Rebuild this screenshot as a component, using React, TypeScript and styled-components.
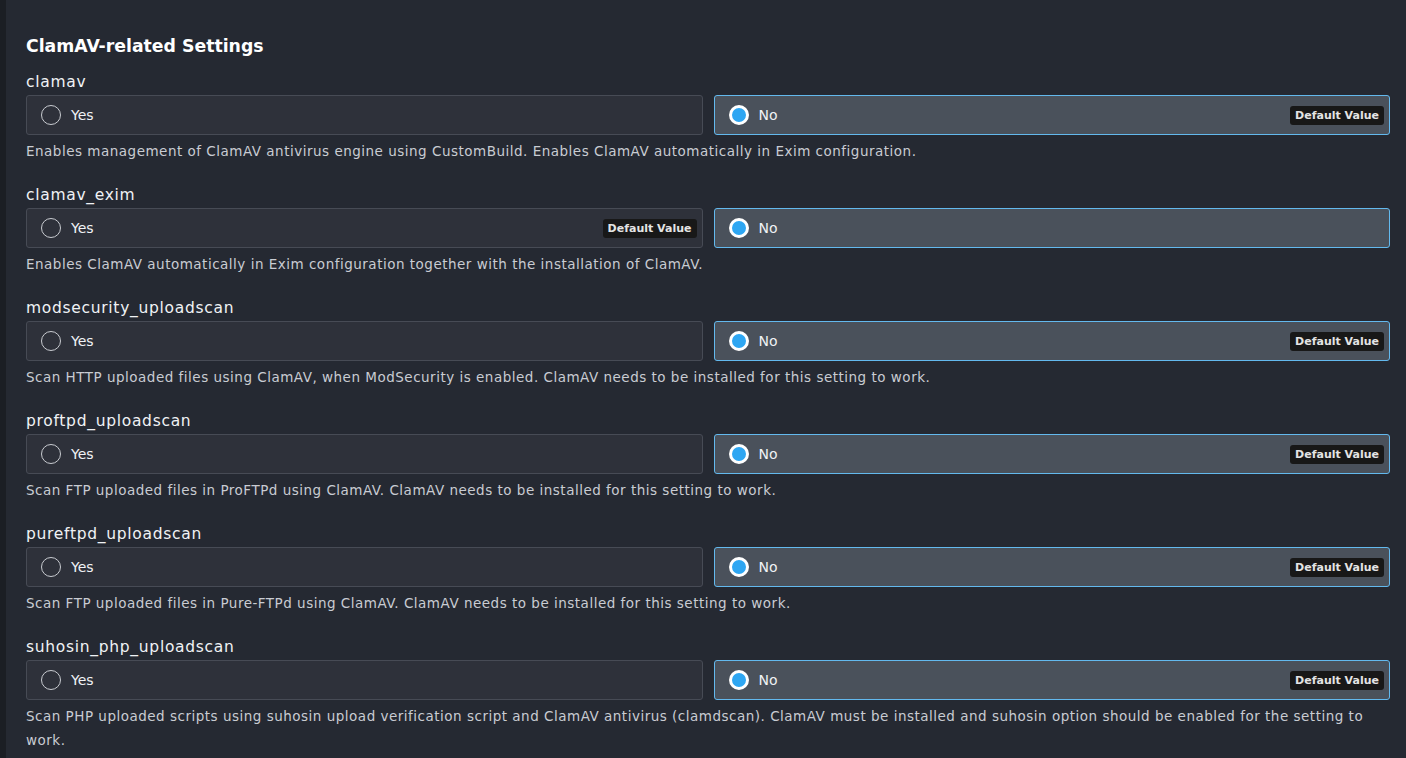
import React from "react";
import styled, { createGlobalStyle } from "styled-components";

const Global = createGlobalStyle`
  html, body { margin: 0; padding: 0; background: #252932; }
  body { font-family: "DejaVu Sans", "Open Sans", sans-serif; }
  * { box-sizing: border-box; }
`;

const Page = styled.div`
  display: flex;
  min-height: 758px;
  background: #252932;
`;

const Strip = styled.div`
  width: 6px;
  flex: none;
  background: #1b1e24;
`;

const Content = styled.div`
  flex: 1;
  padding: 34px 16px 0 20px;
`;

const Title = styled.h2`
  margin: 0 0 13px;
  font-size: 17.3px;
  line-height: 24px;
  font-weight: 700;
  color: #ffffff;
`;

const Field = styled.div`
  margin-bottom: 21px;
`;

const Label = styled.div`
  font-size: 15.5px;
  line-height: 22px;
  letter-spacing: 0.7px;
  color: #f0f2f5;
  margin-bottom: 2px;
`;

const Options = styled.div`
  display: grid;
  grid-template-columns: 1fr 1fr;
  gap: 11px;
`;

const Option = styled.div<{ $selected: boolean }>`
  height: 40px;
  display: flex;
  align-items: center;
  padding: 0 5px 0 14px;
  border-radius: 3px;
  border: 1px solid ${(p) => (p.$selected ? "#63b9ee" : "#474b55")};
  background: ${(p) => (p.$selected ? "#4a515b" : "#2e313a")};
`;

const Radio = styled.span<{ $selected: boolean }>`
  width: 20px;
  height: 20px;
  border-radius: 50%;
  flex: none;
  box-sizing: border-box;
  ${(p) =>
    p.$selected
      ? `background: #2ea6f2; border: 3px solid #ffffff;`
      : `background: #2e313a; border: 1.5px solid #c9ccd1;`}
`;

const OptText = styled.span`
  margin-left: 10px;
  font-size: 14px;
  color: #f0f2f5;
  flex: 1;
`;

const Badge = styled.span`
  background: #181818;
  color: #e4e4e4;
  font-size: 11px;
  font-weight: 700;
  padding: 2px 5px;
  border-radius: 3px;
  line-height: 15px;
`;

const Desc = styled.div`
  margin-top: 4px;
  font-size: 13.5px;
  line-height: 24px;
  letter-spacing: 0.5px;
  color: #c9ccd2;
`;

type Item = { name: string; value: "yes" | "no"; def: "yes" | "no"; desc: string };

const items: Item[] = [
  {
    name: "clamav",
    value: "no",
    def: "no",
    desc: "Enables management of ClamAV antivirus engine using CustomBuild. Enables ClamAV automatically in Exim configuration.",
  },
  {
    name: "clamav_exim",
    value: "no",
    def: "yes",
    desc: "Enables ClamAV automatically in Exim configuration together with the installation of ClamAV.",
  },
  {
    name: "modsecurity_uploadscan",
    value: "no",
    def: "no",
    desc: "Scan HTTP uploaded files using ClamAV, when ModSecurity is enabled. ClamAV needs to be installed for this setting to work.",
  },
  {
    name: "proftpd_uploadscan",
    value: "no",
    def: "no",
    desc: "Scan FTP uploaded files in ProFTPd using ClamAV. ClamAV needs to be installed for this setting to work.",
  },
  {
    name: "pureftpd_uploadscan",
    value: "no",
    def: "no",
    desc: "Scan FTP uploaded files in Pure-FTPd using ClamAV. ClamAV needs to be installed for this setting to work.",
  },
  {
    name: "suhosin_php_uploadscan",
    value: "no",
    def: "no",
    desc: "Scan PHP uploaded scripts using suhosin upload verification script and ClamAV antivirus (clamdscan). ClamAV must be installed and suhosin option should be enabled for the setting to work.",
  },
];

export default function App() {
  return (
    <Page>
      <Global />
      <Strip />
      <Content>
        <Title>ClamAV-related Settings</Title>
        {items.map((it) => (
          <Field key={it.name}>
            <Label>{it.name}</Label>
            <Options>
              {(["yes", "no"] as const).map((v) => (
                <Option key={v} $selected={it.value === v}>
                  <Radio $selected={it.value === v} />
                  <OptText>{v === "yes" ? "Yes" : "No"}</OptText>
                  {it.def === v && <Badge>Default Value</Badge>}
                </Option>
              ))}
            </Options>
            <Desc>{it.desc}</Desc>
          </Field>
        ))}
      </Content>
    </Page>
  );
}
